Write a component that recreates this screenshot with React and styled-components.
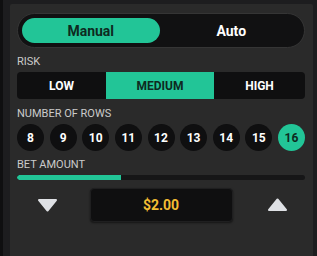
import { useState } from "react"
import styled, { createGlobalStyle } from "styled-components"

const GREEN = "#22c597"

const GlobalStyle = createGlobalStyle`
  html, body {
    margin: 0;
    padding: 0;
    background: #1d1d1f;
    font-family: Roboto, "Liberation Sans", Arial, sans-serif;
    overflow: hidden;
  }
`

const RISKS = [
  { id: "low", label: "LOW", width: 89 },
  { id: "medium", label: "MEDIUM", width: 108 },
  { id: "high", label: "HIGH", width: 91 }
]

const ROWS = [8, 9, 10, 11, 12, 13, 14, 15, 16]

const App = () => {
  const [mode, setMode] = useState("manual")
  const [risk, setRisk] = useState("medium")
  const [rows, setRows] = useState(16)

  return (
    <Page>
      <GlobalStyle />
      <Panel>
        <ModeSwitch>
          <ModeButton $active={mode === "manual"} onClick={() => setMode("manual")}>Manual</ModeButton>
          <ModeButton $active={mode === "auto"} onClick={() => setMode("auto")}>Auto</ModeButton>
        </ModeSwitch>

        <Label>Risk</Label>
        <RiskBar>
          {RISKS.map(r => (
            <RiskButton key={r.id} $width={r.width} $active={risk === r.id} onClick={() => setRisk(r.id)}>
              {r.label}
            </RiskButton>
          ))}
        </RiskBar>

        <Label $top={8}>Number of rows</Label>
        <RowList>
          {ROWS.map(n => (
            <RowButton key={n} $active={rows === n} onClick={() => setRows(n)}>{n}</RowButton>
          ))}
        </RowList>

        <Label $top={7}>Bet amount</Label>
        <Slider>
          <SliderFill style={{ width: "36%" }} />
        </Slider>

        <AmountRow>
          <Arrow $side="left" aria-label="decrease">
            <svg width="21" height="14" viewBox="0 0 21 14">
              <polygon points="2,2 19,2 10.5,12.5" fill="#dfe1e5" stroke="#dfe1e5" strokeWidth="2" strokeLinejoin="round" />
            </svg>
          </Arrow>
          <AmountBox>$2.00</AmountBox>
          <Arrow $side="right" aria-label="increase">
            <svg width="21" height="14" viewBox="0 0 21 14">
              <polygon points="2,12 19,12 10.5,1.5" fill="#dfe1e5" stroke="#dfe1e5" strokeWidth="2" strokeLinejoin="round" />
            </svg>
          </Arrow>
        </AmountRow>
      </Panel>
    </Page>
  )
}

const Page = styled.div`
  height: 256px;
  padding: 4px 4px 0 7px;
  border-left: 3px solid #0f0f10;
  box-sizing: border-box;
  display: flex;
`

const Panel = styled.div`
  flex: 1;
  background: #2a2a2a;
  border-radius: 2px 2px 0 0;
  padding: 9px 8px 0 7px;
  display: flex;
  flex-direction: column;
`

const ModeSwitch = styled.div`
  height: 35px;
  box-sizing: border-box;
  border-radius: 18px;
  background: #111112;
  border: 1px solid #353535;
  padding: 4px;
  display: grid;
  grid-template-columns: 1fr 1fr;
  gap: 3px;
`

const ModeButton = styled.button`
  border: none;
  border-radius: 13px;
  background: ${p => p.$active ? GREEN : "transparent"};
  color: ${p => p.$active ? "#0e2a21" : "#ffffff"};
  font-family: inherit;
  font-size: 14px;
  font-weight: 700;
  cursor: pointer;
  padding: 0;
`

const Label = styled.div`
  margin-top: ${p => p.$top ?? 7}px;
  font-size: 11px;
  line-height: 14px;
  color: #cbcbcb;
  text-transform: uppercase;
`

const RiskBar = styled.div`
  margin-top: 3px;
  height: 27px;
  display: flex;
  background: #0f0f10;
  border-radius: 4px;
  overflow: hidden;
`

const RiskButton = styled.button`
  width: ${p => p.$width}px;
  flex: ${p => p.$width} 1 auto;
  border: none;
  padding: 0;
  background: ${p => p.$active ? GREEN : "transparent"};
  color: ${p => p.$active ? "#0e2a21" : "#ffffff"};
  font-family: inherit;
  font-size: 12px;
  font-weight: 700;
  cursor: pointer;
`

const RowList = styled.div`
  margin-top: 3px;
  display: flex;
  justify-content: space-between;
`

const RowButton = styled.button`
  width: 27px;
  height: 27px;
  border-radius: 50%;
  border: none;
  padding: 0;
  background: ${p => p.$active ? GREEN : "#0f0f10"};
  color: ${p => p.$active ? "#0e2a21" : "#ffffff"};
  font-family: inherit;
  font-size: 12px;
  font-weight: 700;
  cursor: pointer;
`

const Slider = styled.div`
  margin-top: 3px;
  height: 5px;
  border-radius: 3px;
  background: #161617;
  overflow: hidden;
`

const SliderFill = styled.div`
  height: 100%;
  background: ${GREEN};
  border-radius: 3px 0 0 3px;
`

const AmountRow = styled.div`
  margin-top: 8px;
  display: grid;
  grid-template-columns: 1fr 143px 1fr;
  align-items: center;
`

const Arrow = styled.button`
  justify-self: ${p => p.$side === "left" ? "start" : "end"};
  margin: ${p => p.$side === "left" ? "0 0 0 20px" : "0 17px 0 0"};
  background: none;
  border: none;
  padding: 0;
  display: flex;
  cursor: pointer;
`

const AmountBox = styled.div`
  height: 34px;
  box-sizing: border-box;
  border-radius: 4px;
  background: #0f0f10;
  border: 1px solid #1f1f20;
  box-shadow: 0 1px 2px rgba(0, 0, 0, 0.5);
  display: flex;
  align-items: center;
  justify-content: center;
  color: #f3bd33;
  font-size: 14px;
  font-weight: 700;
`

export default App
